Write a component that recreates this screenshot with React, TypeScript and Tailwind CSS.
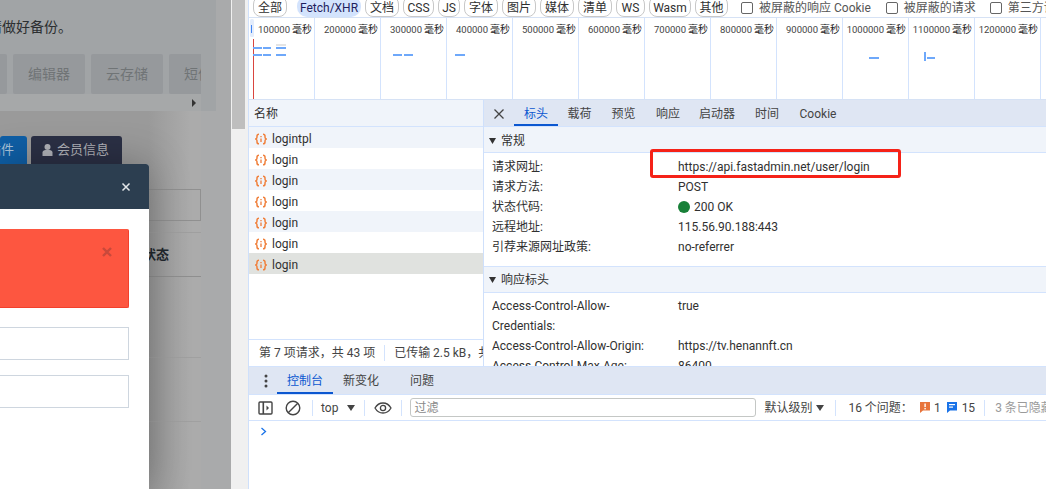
import React from "react";

const Xhr = () => (
  <svg width="14" height="14" viewBox="0 0 14 14" fill="none" className="shrink-0">
    <path d="M5 2.2C3.6 2.2 3 2.8 3 4.1V5.3C3 6.2 2.4 6.9 1.2 7C2.4 7.1 3 7.8 3 8.7V9.9C3 11.2 3.6 11.8 5 11.8" stroke="#f0803c" strokeWidth="1.5" />
    <path d="M9 2.2C10.4 2.2 11 2.8 11 4.1V5.3C11 6.2 11.6 6.9 12.8 7C11.6 7.1 11 7.8 11 8.7V9.9C11 11.2 10.4 11.8 9 11.8" stroke="#f0803c" strokeWidth="1.5" />
    <path d="M7 4V5.3M7 6.5V10" stroke="#ee7a3a" strokeWidth="1.3" />
  </svg>
);

const Pill = ({ t, w, on }: { t: string; w: string; on?: boolean }) =>
  on ? (
    <div className={`h-[21px] -mt-[4px] pt-[2px] flex items-center justify-center rounded-[10px] bg-[#d3e3fd] text-[#1f1f5f] shrink-0 ${w}`}>{t}</div>
  ) : (
    <div className={`h-[21px] -mt-[4px] pt-[2px] flex items-center justify-center rounded-[8px] border border-[#c8c8c8] bg-white text-[#303030] shrink-0 ${w}`}>{t}</div>
  );

const Check = ({ t, cls }: { t: string; cls: string }) => (
  <div className={`flex items-center gap-[6px] shrink-0 text-[#555] h-4 ${cls}`}>
    <span className="w-3 h-3 rounded-[2px] border border-[#666] bg-white" />
    <span>{t}</span>
  </div>
);

const Tab = ({ t, on, cls }: { t: string; on?: boolean; cls?: string }) => (
  <div className={`h-full flex items-center justify-center shrink-0 ${on ? "text-[#0b57d0] border-b-2 border-[#0b57d0] pt-[2px]" : "text-[#444]"} ${cls ?? ""}`}>{t}</div>
);

const Row = ({ k, children }: { k: string; children: React.ReactNode }) => (
  <div className="flex h-5 items-center pl-2">
    <div className="w-[186px] shrink-0 text-[#303030] whitespace-nowrap">{k}</div>
    <div className="text-[#303030] flex items-center gap-[4px]">{children}</div>
  </div>
);

const ticks = [100000, 200000, 300000, 400000, 500000, 600000, 700000, 800000, 900000, 1000000, 1100000, 1200000];

export default function App() {
  const names = ["logintpl", "login", "login", "login", "login", "login", "login"];
  return (
    <div className="relative w-[1046px] h-[489px] overflow-hidden flex text-xs bg-white font-['Roboto','Noto_Sans_CJK_SC',sans-serif]">
      {/* dimmed page */}
      <div className="relative w-[231px] shrink-0 h-full flex bg-[#a9aaab]">
        <div className="w-[216px] shrink-0 h-full flex flex-col">
          <div className="h-[111px] shrink-0 bg-[#a1a4a6] overflow-hidden flex flex-col">
            <div className="h-[54px] shrink-0 pt-[16px] text-sm leading-[22px] text-[#2c2f31] whitespace-nowrap flex justify-end pr-[144px]">请做好备份。</div>
            <div className="h-10 shrink-0 w-[201px] overflow-hidden flex">
              <div className="flex gap-[6px] text-sm text-[#707476] -ml-[65px] shrink-0">
                <div className="w-[72px] shrink-0 bg-[#96999c] rounded-[2px]" />
                {["编辑器", "云存储", "短信息"].map((t) => (
                  <div key={t} className="w-[72px] shrink-0 bg-[#96999c] rounded-[2px] flex items-center justify-center">{t}</div>
                ))}
              </div>
            </div>
            <div className="w-[201px] flex-1 bg-[#a6a8a9] flex justify-end pr-1 pt-[5px]">
              <svg width="6" height="8" viewBox="0 0 6 8"><path d="M1 0L5 4L1 8Z" fill="#333" /></svg>
            </div>
          </div>
          <div className="flex-1 w-[201px] flex flex-col bg-[linear-gradient(90deg,#9a9a9a_149px,#ababab_190px)]">
            <div className="h-[25px] shrink-0" />
            <div className="h-7 shrink-0 flex gap-1 items-stretch">
              <div className="w-[27px] rounded-t-[3px] bg-[#0f5fa6] text-[#a9c3da] text-[13px] flex items-center justify-end pr-[13px] overflow-hidden whitespace-nowrap">插件</div>
              <div className="w-[91px] rounded-t-[3px] bg-[#2b3045] text-[#b0b2b8] text-[13px] flex items-center justify-center gap-1 pr-[2px]">
                <svg width="11" height="12" viewBox="0 0 11 12" fill="#b0b2b8"><circle cx="5.5" cy="3" r="3" /><path d="M0.5 12V8.5C0.5 7 2 6 3.5 6H7.5C9 6 10.5 7 10.5 8.5V12Z" /></svg>
                会员信息
              </div>
            </div>
            <div className="h-[25px] shrink-0" />
            <div className="h-8 shrink-0 border border-[#909090]" />
            <div className="h-[11px] shrink-0" />
            <div className="h-[45px] shrink-0 border-t border-[#9f9f9f] border-b border-b-[#8f8f8f] flex items-center justify-end pr-[32px] text-[13px] font-semibold text-[#22282e] whitespace-nowrap">状态</div>
            <div className="h-[81px] shrink-0 border-b border-[#a0a0a0]" />
            <div className="h-[64px] shrink-0 border-b border-[#a0a0a0]" />
          </div>
        </div>
        <div className="flex-1 bg-[#a9aaab]" />
        {/* modal */}
        <div className="absolute left-0 top-[164px] bottom-0 w-[149px] bg-white flex flex-col shadow-[0_0_40px_rgba(0,0,0,0.3)] rounded-tr-[3px]">
          <div className="h-[45px] shrink-0 bg-[#2c3e50] flex items-center justify-end pr-[18px] rounded-tr-[3px]">
            <svg width="10" height="10" viewBox="0 0 10 10"><path d="M1.5 1.5L8.5 8.5M8.5 1.5L1.5 8.5" stroke="#e4e7ea" strokeWidth="1.5" /></svg>
          </div>
          <div className="flex-1 pr-5 pt-5 flex flex-col">
            <div className="h-[79px] shrink-0 bg-[#fd5640] border-r border-b border-[#f2402c] rounded-r-[2px] flex justify-end pr-4 pt-[18px]">
              <svg width="10" height="10" viewBox="0 0 10 10"><path d="M1 1L9 9M9 1L1 9" stroke="#c8493b" strokeWidth="2.4" /></svg>
            </div>
            <div className="h-[33px] shrink-0 mt-[19px] border border-l-0 border-[#ced6df]" />
            <div className="h-[33px] shrink-0 mt-[15px] border border-l-0 border-[#ced6df]" />
          </div>
        </div>
      </div>

      {/* scrollbar */}
      <div className="w-[17px] shrink-0 h-full bg-[#f0f0f0] pl-px pr-[3px]">
        <div className="h-[129px] bg-[#bebebe]" />
      </div>

      {/* devtools */}
      <div className="relative flex-1 min-w-0 h-full border-l border-[#cfe0fb] flex flex-col overflow-hidden">
        {/* filter bar */}
        <div className="h-[18px] shrink-0 flex gap-1 pl-1 border-b border-[#d6e2f5] overflow-hidden whitespace-nowrap">
          <Pill t="全部" w="w-[34px]" />
          <div className="w-px h-[14px] bg-[#c8d4e8] mx-[1px]" />
          <Pill t="Fetch/XHR" w="w-[64px]" on />
          <Pill t="文档" w="w-[34px]" />
          <Pill t="CSS" w="w-[31px]" />
          <Pill t="JS" w="w-[22px]" />
          <Pill t="字体" w="w-[34px]" />
          <Pill t="图片" w="w-[34px]" />
          <Pill t="媒体" w="w-[34px]" />
          <Pill t="清单" w="w-[34px]" />
          <Pill t="WS" w="w-[29px]" />
          <Pill t="Wasm" w="w-[42px]" />
          <Pill t="其他" w="w-[33px]" />
          <Check t="被屏蔽的响应 Cookie" cls="ml-[9px]" />
          <Check t="被屏蔽的请求" cls="ml-[11px]" />
          <Check t="第三方请求" cls="ml-[10px]" />
        </div>
        {/* timeline */}
        <div className="relative h-[82px] shrink-0 flex border-b border-[#d6e2f5]">
          {ticks.map((t) => (
            <div key={t} className="w-[66px] shrink-0 h-full border-r border-[#d3e3fd] flex justify-end items-baseline pr-[2px] pt-[5px] text-[9.5px] leading-[14px] text-[#444] whitespace-nowrap">
              {t}
              <span className="ml-[2px] text-[10px] text-[#222]">毫秒</span>
            </div>
          ))}
          <svg className="absolute left-0 top-0" width="797" height="81" viewBox="248 18 797 81">
            <rect x="249" y="19" width="4" height="18" rx="1.5" fill="#e3ecfb" />
            <rect x="250" y="25" width="1" height="8" fill="#4285f4" />
            <rect x="252" y="39" width="1" height="60" fill="#d9453f" />
            <rect x="275" y="44" width="10" height="2" fill="#e4e4e4" />
            {[
              [252, 47, 9], [262, 47, 8], [275, 47, 10], [252, 54, 9], [262, 54, 8], [275, 54, 10],
              [392, 54, 9], [403, 54, 9], [454, 54, 10], [868, 57, 10], [926, 57, 8],
            ].map(([x, y, w], i) => (
              <rect key={i} x={x} y={y} width={w} height="2" fill="#6ea8fa" />
            ))}
            <rect x="923" y="52" width="2" height="9" fill="#6ea8fa" />
          </svg>
        </div>

        <div className="flex-1 min-h-0 flex">
          {/* requests */}
          <div className="w-[235px] shrink-0 border-r border-[#cfe0fb] flex flex-col">
            <div className="h-[27px] shrink-0 bg-[#f0f4fa] border-b border-[#d3e3fd] flex items-center pl-[5px] pt-[2px] text-[#303030]">名称</div>
            {names.map((n, i) => (
              <div key={i} className={`h-[21px] shrink-0 flex items-center pl-[5px] pt-[2px] gap-[4px] text-[#303030] ${i === 6 ? "bg-[#e0e2df]" : i % 2 === 0 ? "bg-[#f0f4fa]" : "bg-white"}`}>
                <Xhr />
                {n}
              </div>
            ))}
            <div className="flex-1" />
            <div className="h-[27px] shrink-0 border-t border-[#d3e3fd] flex items-center pl-[10px] text-[#444] whitespace-nowrap overflow-hidden">
              第 7 项请求，共 43 项
              <span className="w-px h-4 bg-[#d3e3fd] mx-[9px] shrink-0" />
              已传输 2.5 kB，共
            </div>
          </div>
          {/* details */}
          <div className="flex-1 min-w-0 flex flex-col overflow-hidden">
            <div className="h-[27px] shrink-0 bg-[#dfe6f3] border-b border-[#d3e3fd] flex items-center pt-[2px]">
              <div className="w-[30px] shrink-0 flex justify-center">
                <svg width="12" height="12" viewBox="0 0 12 12"><path d="M1.5 1.5L10.5 10.5M10.5 1.5L1.5 10.5" stroke="#444" strokeWidth="1.3" /></svg>
              </div>
              <Tab t="标头" on cls="w-[44px]" />
              <Tab t="载荷" cls="w-[43px]" />
              <Tab t="预览" cls="w-[45px]" />
              <Tab t="响应" cls="w-[44px]" />
              <Tab t="启动器" cls="w-[54px]" />
              <Tab t="时间" cls="w-[46px]" />
              <Tab t="Cookie" cls="w-[56px]" />
            </div>
            <div className="h-[26px] shrink-0 bg-[#f0f4fa] border-b border-[#d3e3fd] flex items-center pl-[5px] pt-[3px] gap-[5px] text-[#303030]">
              <svg width="7" height="6" viewBox="0 0 7 6"><path d="M0 0H7L3.5 6Z" fill="#333" /></svg>
              常规
            </div>
            <div className="pt-[4px] pb-[9px] shrink-0">
              <Row k="请求网址:">https://api.fastadmin.net/user/login</Row>
              <Row k="请求方法:">POST</Row>
              <Row k="状态代码:"><span className="w-3 h-3 rounded-full bg-[#188038] inline-block" />200 OK</Row>
              <Row k="远程地址:">115.56.90.188:443</Row>
              <Row k="引荐来源网址政策:">no-referrer</Row>
            </div>
            <div className="h-[27px] shrink-0 bg-[#f0f4fa] border-y border-[#d3e3fd] flex items-center pl-[5px] gap-[5px] text-[#303030]">
              <svg width="7" height="6" viewBox="0 0 7 6"><path d="M0 0H7L3.5 6Z" fill="#333" /></svg>
              响应标头
            </div>
            <div className="pt-[3px] shrink-0">
              <Row k="Access-Control-Allow-">true</Row>
              <Row k="Credentials:">{""}</Row>
              <Row k="Access-Control-Allow-Origin:">https://tv.henannft.cn</Row>
              <Row k="Access-Control-Max-Age:">86400</Row>
            </div>
          </div>
        </div>

        {/* console tabs */}
        <div className="h-[28px] shrink-0 bg-[#dfe6f3] border-t border-[#d3e3fd] flex items-center">
          <div className="w-[28px] shrink-0 flex justify-center pl-[5px]">
            <svg width="4" height="14" viewBox="0 0 4 14" fill="#444"><circle cx="2" cy="2" r="1.5" /><circle cx="2" cy="7" r="1.5" /><circle cx="2" cy="12" r="1.5" /></svg>
          </div>
          <Tab t="控制台" on cls="w-[56px]" />
          <Tab t="新变化" cls="w-[54px] ml-[1px]" />
          <Tab t="问题" cls="w-[38px] ml-[15px]" />
        </div>
        {/* console toolbar */}
        <div className="h-[27px] shrink-0 border-y border-[#d3e3fd] flex items-center text-[#444] whitespace-nowrap">
          <svg className="ml-[9px] shrink-0" width="15" height="14" viewBox="0 0 15 14" fill="none"><rect x="1" y="1" width="13" height="12" rx="1" stroke="#444" strokeWidth="1.4" /><rect x="4.5" y="1" width="1.6" height="12" fill="#444" /><path d="M8.5 4.5L11 7L8.5 9.5Z" fill="#444" /></svg>
          <svg className="ml-[12px] shrink-0" width="16" height="16" viewBox="0 0 16 16" fill="none"><circle cx="8" cy="8" r="6.8" stroke="#444" strokeWidth="1.4" /><path d="M3.2 12.8L12.8 3.2" stroke="#444" strokeWidth="1.4" /></svg>
          <span className="w-px h-4 bg-[#d3e3fd] ml-[11px] shrink-0" />
          <span className="ml-[8px]">top</span>
          <svg className="ml-[9px] shrink-0" width="8" height="6" viewBox="0 0 8 6"><path d="M0 0H8L4 6Z" fill="#444" /></svg>
          <span className="w-px h-4 bg-[#d3e3fd] ml-[9px] shrink-0" />
          <svg className="ml-[9px] shrink-0" width="18" height="12" viewBox="0 0 18 12" fill="none"><path d="M1 6C3 2.5 6 1 9 1C12 1 15 2.5 17 6C15 9.5 12 11 9 11C6 11 3 9.5 1 6Z" stroke="#444" strokeWidth="1.3" /><circle cx="9" cy="6" r="2.6" stroke="#444" strokeWidth="1.3" /></svg>
          <span className="w-px h-4 bg-[#d3e3fd] ml-[9px] shrink-0" />
          <div className="ml-2 w-[346px] h-[19px] shrink-0 rounded-[3px] border border-[#c4c7c5] pl-[3px] flex items-center text-[#8a8a8a]">过滤</div>
          <span className="ml-[8px]">默认级别</span>
          <svg className="ml-[4px] shrink-0" width="8" height="6" viewBox="0 0 8 6"><path d="M0 0H8L4 6Z" fill="#444" /></svg>
          <span className="w-px h-4 bg-[#d3e3fd] ml-[11px] shrink-0" />
          <span className="ml-[12px]">16 个问题：</span>
          <svg className="ml-[7px] shrink-0" width="10" height="11" viewBox="0 0 10 11"><path d="M0 0H10V8.5H3L0 11Z" fill="#e8743b" /><rect x="4.4" y="1.5" width="1.4" height="3.6" fill="#fff" /><rect x="4.4" y="6" width="1.4" height="1.4" fill="#fff" /></svg>
          <span className="ml-[4px]">1</span>
          <svg className="ml-[6px] shrink-0" width="10" height="11" viewBox="0 0 10 11"><path d="M0 0H10V8.5H3L0 11Z" fill="#1a73e8" /><rect x="2" y="2" width="6" height="1.2" fill="#fff" /><rect x="2" y="4.5" width="4" height="1.2" fill="#fff" /></svg>
          <span className="ml-[5px]">15</span>
          <span className="w-px h-4 bg-[#d3e3fd] ml-[9px] shrink-0" />
          <span className="ml-[10px] text-[#9a9a9a]">3 条已隐藏</span>
        </div>
        {/* console body */}
        <div className="h-[68px] shrink-0 bg-white pl-[11px] pt-[6px]">
          <svg width="7" height="9" viewBox="0 0 7 9" fill="none"><path d="M1.5 1L5.5 4.5L1.5 8" stroke="#1a73e8" strokeWidth="1.3" /></svg>
        </div>
      </div>

      {/* red annotation */}
      <div className="absolute left-[650px] top-[149px] w-[251px] h-[29px] border-[3px] border-[#f52218] rounded-[3px]" />
    </div>
  );
}
